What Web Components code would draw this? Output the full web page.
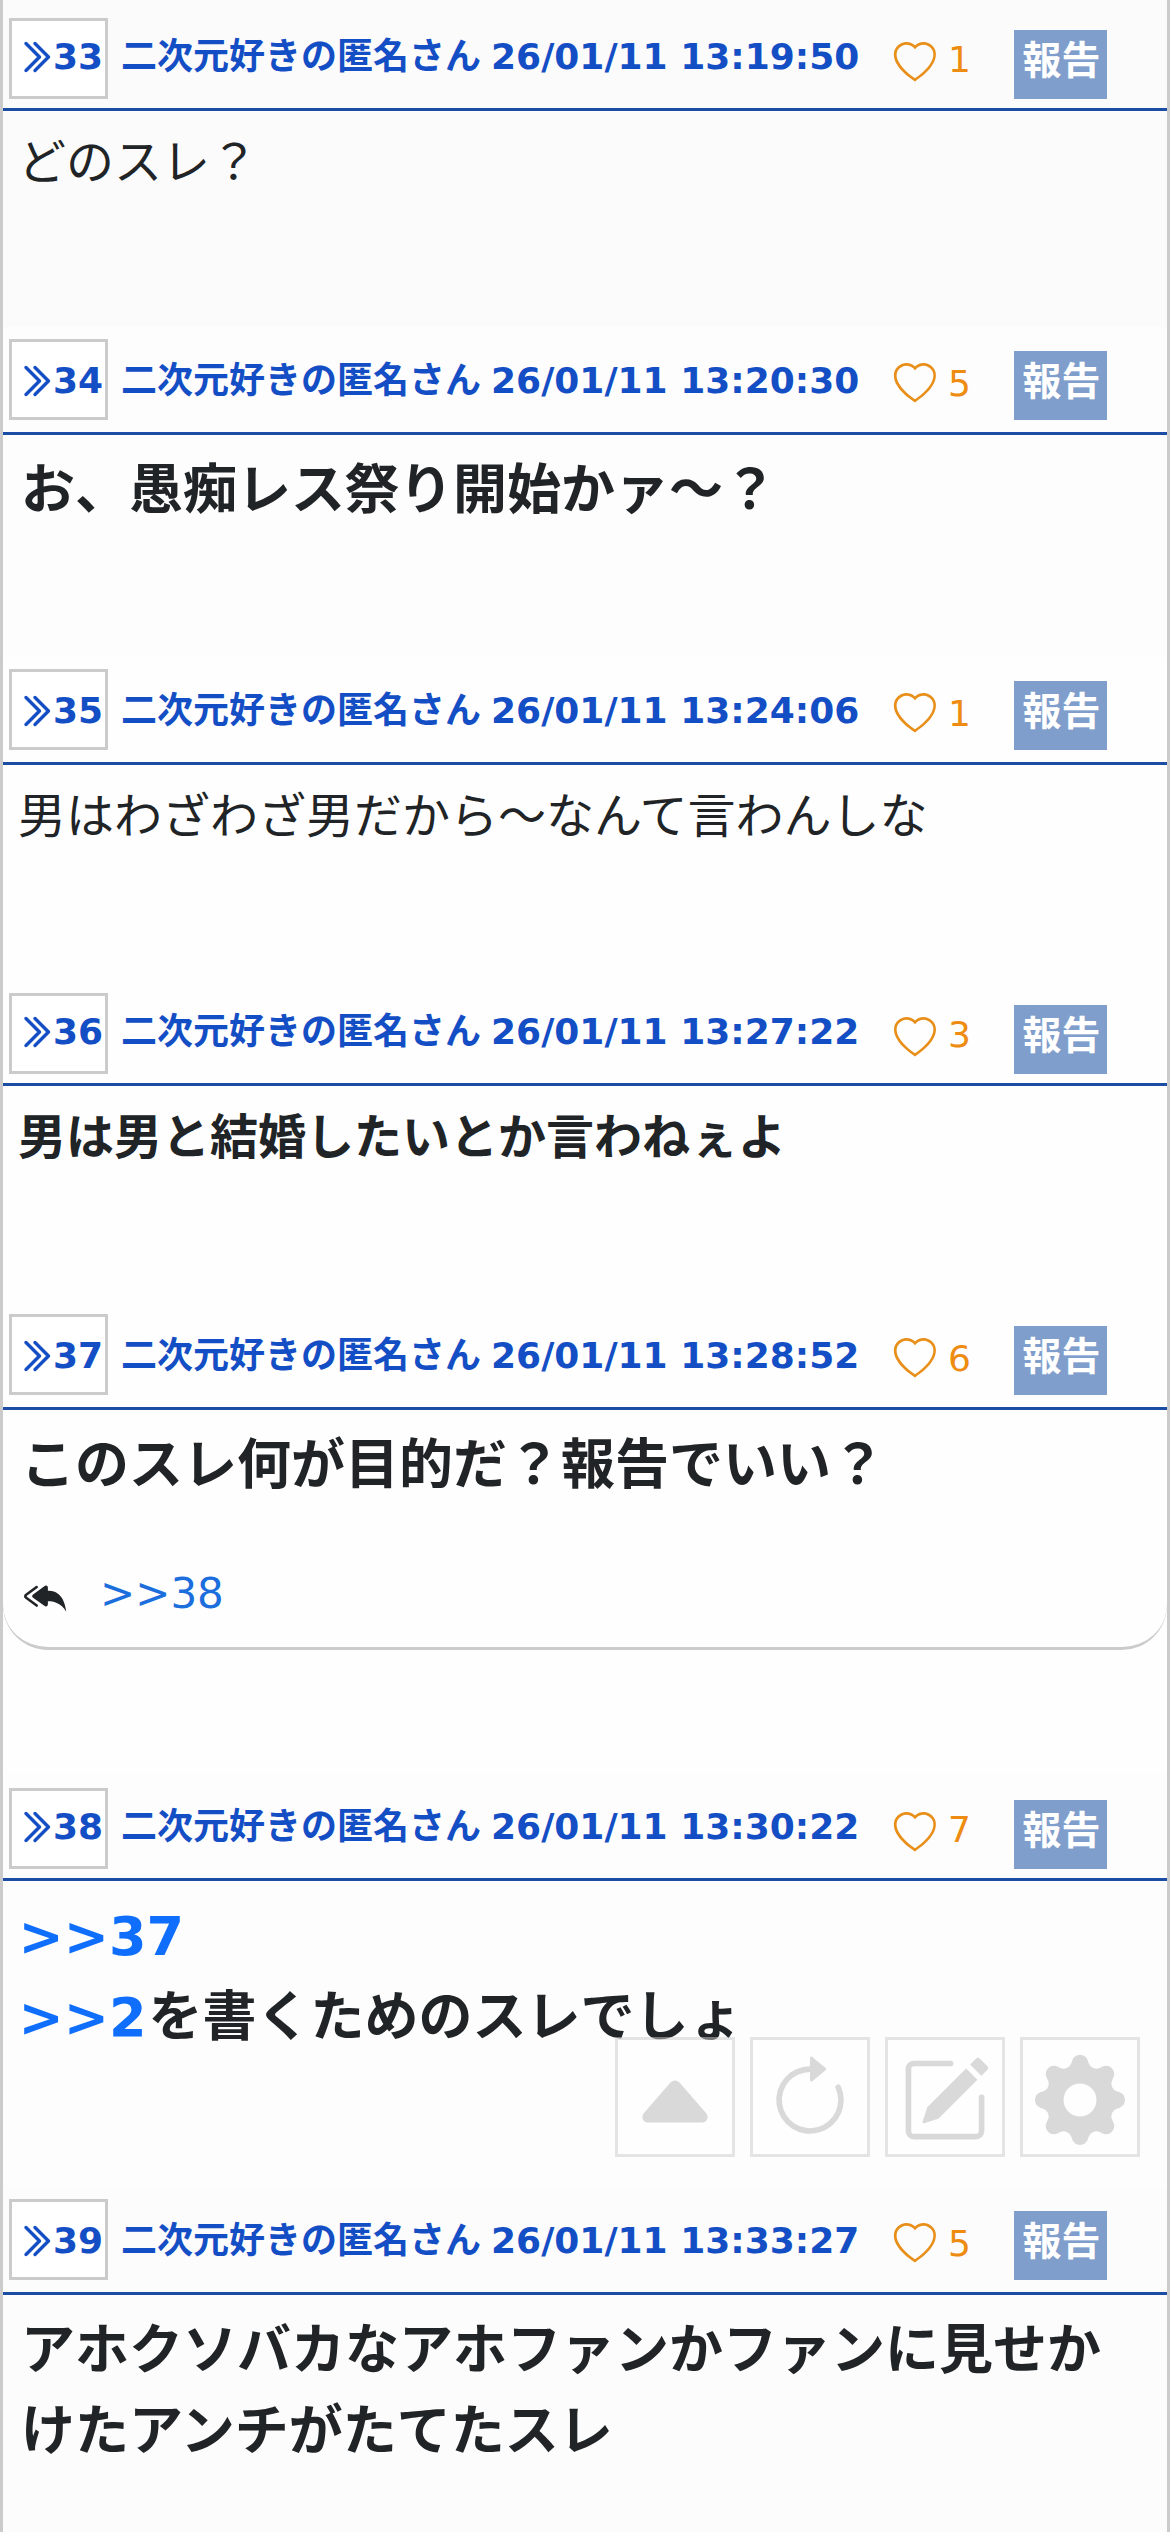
<!DOCTYPE html>
<html lang="ja">
<head>
<meta charset="utf-8">
<title>スレッド</title>
<style>
html,body{margin:0;padding:0}
body{background:#fefefe;color:#212426;font-family:"DejaVu Sans","Noto Sans CJK JP",sans-serif}
</style>
</head>
<body>
<thread-view>
  <thread-post no="33" time="26/01/11 13:19:50" likes="1" lift="9" style="height:324px;--bg:#fbfbfb">どのスレ？</thread-post>
  <thread-post no="34" time="26/01/11 13:20:30" likes="5" lift="12" size="big" style="height:330px;--bg:#fdfdfd">お、愚痴レス祭り開始かァ～？</thread-post>
  <thread-post no="35" time="26/01/11 13:24:06" likes="1" lift="12" style="height:321px">男はわざわざ男だから～なんて言わんしな</thread-post>
  <thread-post no="36" time="26/01/11 13:27:22" likes="3" lift="9" size="bold" style="height:324px">男は男と結婚したいとか言わねぇよ</thread-post>
  <thread-post no="37" time="26/01/11 13:28:52" likes="6" lift="12" size="big" style="height:471px">このスレ何が目的だ？報告でいい？<reply-links slot="replies">&gt;&gt;38</reply-links></thread-post>
  <thread-post no="38" time="26/01/11 13:30:22" likes="7" lift="9" size="big" style="height:414px;--bg:#fdfdfd"><res-link>&gt;&gt;37</res-link><br><res-link>&gt;&gt;2</res-link>を書くためのスレでしょ</thread-post>
  <thread-post no="39" time="26/01/11 13:33:27" likes="5" lift="12" size="big" style="height:345px;--bg:#fcfcfc">アホクソバカなアホファンかファンに見せかけたアンチがたてたスレ</thread-post>
  <tool-bar slot="tools"></tool-bar>
</thread-view>
<script>
const ICONS = {
  chevrons: '<path d="M3.646 1.646a.5.5 0 0 1 .708 0l6 6a.5.5 0 0 1 0 .708l-6 6a.5.5 0 0 1-.708-.708L9.293 8 3.646 2.354a.5.5 0 0 1 0-.708z"/><path d="M7.646 1.646a.5.5 0 0 1 .708 0l6 6a.5.5 0 0 1 0 .708l-6 6a.5.5 0 0 1-.708-.708L13.293 8 7.646 2.354a.5.5 0 0 1 0-.708z"/>',
  heart: '<path d="m8 2.748-.717-.737C5.6.281 2.514.878 1.4 3.053c-.523 1.023-.641 2.5.314 4.385.92 1.815 2.834 3.989 6.286 6.357 3.452-2.368 5.365-4.542 6.286-6.357.955-1.886.838-3.362.314-4.385C13.486.878 10.4.28 8.717 2.01L8 2.748zM8 15C-7.333 4.868 3.279-3.04 7.824 1.143c.06.055.119.112.176.171a3.12 3.12 0 0 1 .176-.17C12.72-3.042 23.333 4.867 8 15z"/>',
  reply: '<path d="M8.021 11.9 3.453 8.62a.719.719 0 0 1 0-1.238L8.021 4.1a.716.716 0 0 1 1.079.619V6c1.5 0 6 0 7 8-2.5-4.5-7-4-7-4v1.281c0 .56-.606.898-1.079.62z"/><path d="M5.232 4.293a.5.5 0 0 1-.106.7L1.114 7.945l-.042.028a.147.147 0 0 0 0 .252l.042.028 4.012 2.954a.5.5 0 1 1-.593.805L.539 9.073a1.147 1.147 0 0 1 0-1.946l3.994-2.94a.5.5 0 0 1 .699.106z"/>',
  up: '<path d="m7.247 4.86-4.796 5.481c-.566.647-.106 1.659.753 1.659h9.592a1 1 0 0 0 .753-1.659l-4.796-5.48a1 1 0 0 0-1.506 0z"/>',
  reload: '<path fill-rule="evenodd" d="M8 3a5 5 0 1 0 4.546 2.914.5.5 0 0 1 .908-.417A6 6 0 1 1 8 2v1z"/><path d="M8 4.466V.534a.25.25 0 0 1 .41-.192l2.36 1.966c.12.1.12.284 0 .384L8.41 4.658A.25.25 0 0 1 8 4.466z"/>',
  pencil: '<path d="M15.502 1.94a.5.5 0 0 1 0 .706L14.459 3.69l-2-2L13.502.646a.5.5 0 0 1 .707 0l1.293 1.293zm-1.75 2.456-2-2L4.939 9.21a.5.5 0 0 0-.121.196l-.805 2.414a.25.25 0 0 0 .316.316l2.414-.805a.5.5 0 0 0 .196-.12l6.813-6.814z"/><path fill-rule="evenodd" d="M1 13.5A1.5 1.5 0 0 0 2.5 15h11a1.5 1.5 0 0 0 1.5-1.5v-6a.5.5 0 0 0-1 0v6a.5.5 0 0 1-.5.5h-11a.5.5 0 0 1-.5-.5v-11a.5.5 0 0 1 .5-.5H9a.5.5 0 0 0 0-1H2.5A1.5 1.5 0 0 0 1 2.5v11z"/>',
  gear: '<path d="M9.405 1.05c-.413-1.4-2.397-1.4-2.81 0l-.1.34a1.464 1.464 0 0 1-2.105.872l-.31-.17c-1.283-.698-2.686.705-1.987 1.987l.169.311c.446.82.023 1.841-.872 2.105l-.34.1c-1.4.413-1.4 2.397 0 2.81l.34.1a1.464 1.464 0 0 1 .872 2.105l-.17.31c-.698 1.283.705 2.686 1.987 1.987l.311-.169a1.464 1.464 0 0 1 2.105.872l.1.34c.413 1.4 2.397 1.4 2.81 0l.1-.34a1.464 1.464 0 0 1 2.105-.872l.31.17c1.283.698 2.686-.705 1.987-1.987l-.169-.311a1.464 1.464 0 0 1 .872-2.105l.34-.1c1.4-.413 1.4-2.397 0-2.81l-.34-.1a1.464 1.464 0 0 1-.872-2.105l.17-.31c.698-1.283-.705-2.686-1.987-1.987l-.311.169a1.464 1.464 0 0 1-2.105-.872l-.1-.34zM8 10.93a2.929 2.929 0 1 1 0-5.86 2.929 2.929 0 0 1 0 5.858z"/>'
};
class SvgIcon extends HTMLElement{
  constructor(){super();this.attachShadow({mode:'open'})}
  connectedCallback(){
    this.shadowRoot.innerHTML=`<style>:host{display:block;flex:none}svg{display:block;width:100%;height:100%;overflow:visible;fill:currentColor;stroke:currentColor;stroke-width:var(--stroke,0)}</style><svg viewBox="0 0 16 16">${ICONS[this.getAttribute('name')]}</svg>`;
  }
}
customElements.define('svg-icon',SvgIcon);

class ResLink extends HTMLElement{
  constructor(){super();this.attachShadow({mode:'open'}).innerHTML='<style>:host{display:inline;color:#0f6efc;margin:0 2px 0 -2.5px}</style><slot></slot>'}
}
customElements.define('res-link',ResLink);

class ReplyLinks extends HTMLElement{
  constructor(){super();this.attachShadow({mode:'open'}).innerHTML=`
<style>
:host{display:flex;align-items:center;height:63px;padding-left:21px;gap:34px;font:400 42px/63px "DejaVu Sans","Noto Sans CJK JP",sans-serif}
svg-icon{width:42px;height:42px}
span{color:#1b6edc;margin-bottom:4px}
</style><svg-icon name="reply"></svg-icon><span><slot></slot></span>`}
}
customElements.define('reply-links',ReplyLinks);

class ThreadPost extends HTMLElement{
  constructor(){super();this.attachShadow({mode:'open'})}
  connectedCallback(){
    const a=n=>this.getAttribute(n);
    const replies=this.querySelector('[slot=replies]');
    this.shadowRoot.innerHTML=`
<style>
:host{display:block;box-sizing:border-box;overflow:hidden;background:var(--bg,#fefefe);--lift:${a('lift')}px}
header{display:flex;align-items:flex-end;height:105px;border-bottom:3px solid #1c4da5;color:#144ec5;font:700 36px/54px "DejaVu Sans","Noto Sans CJK JP",sans-serif;white-space:nowrap}
.no{box-sizing:border-box;flex:none;width:99px;height:81px;margin:0 0 var(--lift) 6px;border:3px solid #cbcbcb;background:#fff;display:flex;align-items:flex-end;padding-left:5px}
.no svg-icon{width:36px;height:36px;--stroke:.5;margin-bottom:calc(30.5px - var(--lift))}
.no span{margin-bottom:calc(21px - var(--lift))}
.name{margin:0 0 24px 13px;width:773px;flex:none}
.name time{margin-left:-2.5px}
.heart{width:42px;height:42px;margin-bottom:calc(var(--lift) + 15px);color:#e88f1a}
.likes{margin:0 0 21px 12px;width:66px;font-weight:400;color:#ee8c12}
.report{box-sizing:border-box;width:93px;height:69px;margin-bottom:var(--lift);padding-left:2px;background:#809ecc;color:#fff;font-size:39px;line-height:61px;text-align:center}
.body{padding:15px 15px 0;font-size:48px;line-height:72px}
:host([size=bold]) .body{font-weight:700}
:host([size=big]) .body{font-weight:700;font-size:54px;line-height:81px;padding:15px 18px 0}
.card{box-sizing:border-box;height:240px;border-bottom:3px solid #cbcbcb;border-radius:0 0 45px 45px;display:flex;flex-direction:column;justify-content:space-between;padding-bottom:20px}
</style>
<header>
  <div class="no"><svg-icon name="chevrons"></svg-icon><span>${a('no')}</span></div>
  <div class="name">二次元好きの匿名さん <time>${a('time')}</time></div>
  <svg-icon class="heart" name="heart"></svg-icon>
  <div class="likes">${a('likes')}</div>
  <div class="report">報告</div>
</header>
${replies?'<div class="card"><div class="body"><slot></slot></div><slot name="replies"></slot></div>':'<div class="body"><slot></slot></div>'}`;
  }
}
customElements.define('thread-post',ThreadPost);

class ToolBar extends HTMLElement{
  constructor(){super();this.attachShadow({mode:'open'}).innerHTML=`
<style>
:host{display:flex;gap:15px;opacity:.5}
div{box-sizing:border-box;width:120px;height:120px;border:3px solid #ccc;background:#fff;padding:15px 12px 0;color:#b6b6b6}
svg-icon{width:90px;height:90px}
</style>`+['up','reload','pencil','gear'].map(n=>`<div><svg-icon name="${n}"></svg-icon></div>`).join('')}
}
customElements.define('tool-bar',ToolBar);

class ThreadView extends HTMLElement{
  constructor(){super();this.attachShadow({mode:'open'}).innerHTML=`
<style>
:host{display:block;position:relative;box-sizing:border-box;width:1170px;height:2532px;overflow:hidden;padding-top:3px;border:solid #cbcbcb;border-width:0 3px;background:#fbfbfb}
.tools{position:absolute;right:27px;top:2037px}
</style><slot></slot><div class="tools"><slot name="tools"></slot></div>`}
}
customElements.define('thread-view',ThreadView);
</script>
</body>
</html>
